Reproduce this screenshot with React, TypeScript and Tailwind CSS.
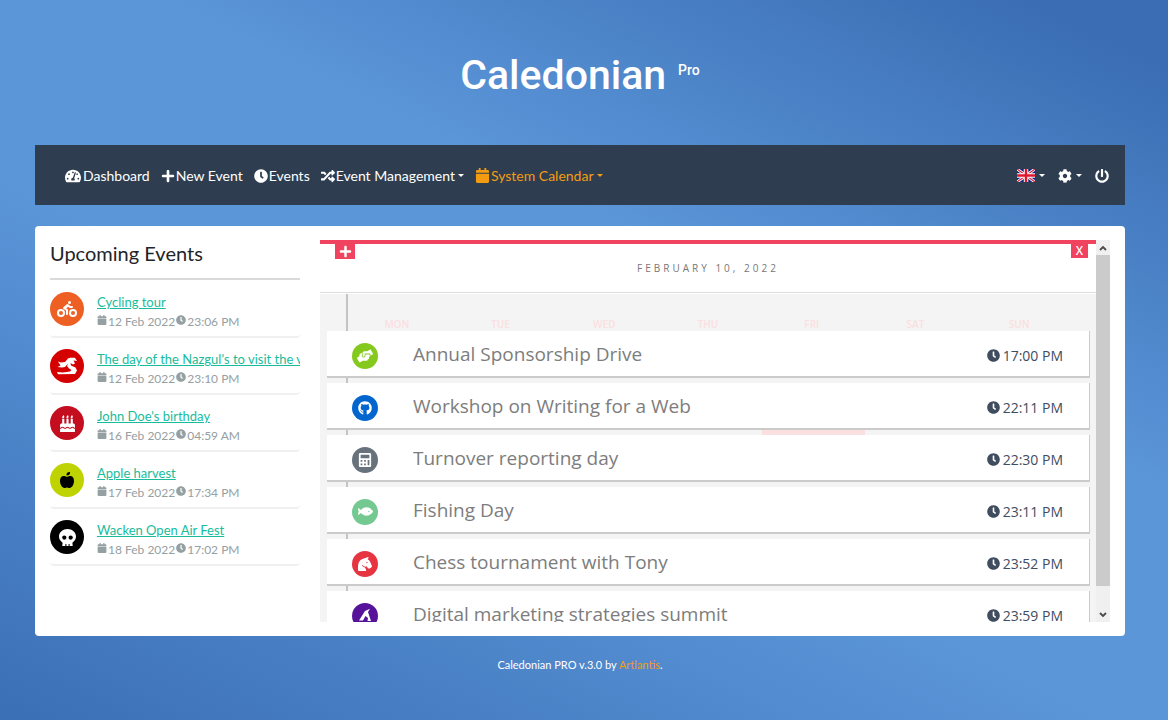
import type { ReactNode } from 'react'
import {
  FaTachometerAlt,
  FaPlus,
  FaClock,
  FaRandom,
  FaCalendar,
  FaCog,
  FaPowerOff,
  FaBiking,
  FaBirthdayCake,
  FaAppleAlt,
  FaSkull,
  FaHandsHelping,
  FaGithub,
  FaCalculator,
  FaFish,
  FaHorseHead
} from 'react-icons/fa'

interface UpcomingEvent {
  title: string
  date: string
  time: string
  color: string
  icon: ReactNode
}

interface DayEvent {
  title: string
  time: string
  color: string
  icon: ReactNode
}

const SerpentIcon = () => (
  <svg viewBox="0 0 22 18" className="h-[18px] w-[22px]" fill="currentColor" aria-hidden="true">
    <path d="M2 4.500 5 5.500 9 5 12 1.500 14 .8 19 .8 21 4 17.500 3.500 19 6.500 17 7.500 14.500 6 15 8.500 19.500 10.500 21 13.500 19 17 2 17.200 1 15 7 15.500 14 14.500 15.500 13 13 11.500 11 9 12 6.500 9 10 6 10.500 1.500 10 4.500 8.500z" />
  </svg>
)

const PeakIcon = () => (
  <svg viewBox="0 0 16 16" className="size-4" fill="currentColor" aria-hidden="true">
    <path d="M2 12.500 8 3 13 .8 11 4 14 13H10.500L11 10 8.500 8 6 12.500z" />
    <path d="M1 14h14v1.500H1z" />
  </svg>
)

const upcomingEvents: UpcomingEvent[] = [
  { title: 'Cycling tour', date: '12 Feb 2022', time: '23:06 PM', color: 'bg-[#ee5f24] text-white', icon: <FaBiking size={20} /> },
  { title: "The day of the Nazgul's to visit the village", date: '12 Feb 2022', time: '23:10 PM', color: 'bg-[#d50000] text-white', icon: <SerpentIcon /> },
  { title: "John Doe's birthday", date: '16 Feb 2022', time: '04:59 AM', color: 'bg-[#c40d1e] text-white', icon: <FaBirthdayCake size={17} /> },
  { title: 'Apple harvest', date: '17 Feb 2022', time: '17:34 PM', color: 'bg-[#bfd300] text-black', icon: <FaAppleAlt size={16} /> },
  { title: 'Wacken Open Air Fest', date: '18 Feb 2022', time: '17:02 PM', color: 'bg-black text-white', icon: <FaSkull size={17} /> }
]

const dayEvents: DayEvent[] = [
  { title: 'Annual Sponsorship Drive', time: '17:00 PM', color: 'bg-[#85c91f]', icon: <FaHandsHelping size={16} /> },
  { title: 'Workshop on Writing for a Web', time: '22:11 PM', color: 'bg-[#0366cf]', icon: <FaGithub size={14} /> },
  { title: 'Turnover reporting day', time: '22:30 PM', color: 'bg-[#68727d]', icon: <FaCalculator size={14} /> },
  { title: 'Fishing Day', time: '23:11 PM', color: 'bg-[#73c990]', icon: <FaFish size={15} /> },
  { title: 'Chess tournament with Tony', time: '23:52 PM', color: 'bg-[#e63441]', icon: <FaHorseHead size={14} /> },
  { title: 'Digital marketing strategies summit', time: '23:59 PM', color: 'bg-[#56139a]', icon: <PeakIcon /> }
]

const weekDays = ['MON', 'TUE', 'WED', 'THU', 'FRI', 'SAT', 'SUN']

const Caret = () => (
  <span className="ml-0.5 inline-block border-x-[3px] border-t-[3px] border-x-transparent border-t-current" />
)

const Flag = () => (
  <svg viewBox="0 0 18 13" className="h-[13px] w-[18px]" aria-hidden="true">
    <path fill="#10237c" d="M0 0h18v13H0z" />
    <path stroke="#fff" strokeWidth="3" d="m0 0 18 13M18 0 0 13" />
    <path stroke="#d8203a" strokeWidth="1.2" d="m0 0 18 13M18 0 0 13" />
    <path stroke="#fff" strokeWidth="4.500" d="M9 0v13M0 6.500h18" />
    <path stroke="#e0162f" strokeWidth="2.500" d="M9 0v13M0 6.500h18" />
  </svg>
)

function Navbar() {
  return (
    <nav className="flex h-[60px] items-center justify-between bg-[#2e3e50] pt-px pr-4 pl-[30px] text-sm text-white">
      <div className="flex items-center gap-[11px]">
        <a href="#" className="flex items-center gap-0.5"><FaTachometerAlt size={16} />Dashboard</a>
        <a href="#" className="flex items-center gap-px"><FaPlus size={14} />New Event</a>
        <a href="#" className="flex items-center gap-px"><FaClock size={14} />Events</a>
        <button type="button" className="flex items-center gap-px"><FaRandom size={14} />Event Management<Caret /></button>
        <button type="button" className="flex items-center gap-px text-[#f39c12]"><FaCalendar size={15} />System Calendar<Caret /></button>
      </div>
      <div className="flex items-center gap-[13px]">
        <button type="button" aria-label="Language" className="flex items-center gap-0.5"><Flag /><Caret /></button>
        <button type="button" aria-label="Settings" className="flex items-center gap-0.5"><FaCog size={14} /><Caret /></button>
        <a href="#" aria-label="Log out"><FaPowerOff size={14} /></a>
      </div>
    </nav>
  )
}

function UpcomingList() {
  return (
    <section className="w-[250px] shrink-0">
      <h2 className="border-b-2 border-[#d9dadb] pb-3 text-xl leading-[26px] text-[#1f2428]">Upcoming Events</h2>
      <ul className="mt-3 flex flex-col gap-[11px]">
        {upcomingEvents.map(event => (
          <li key={event.title} className="flex h-[46px] gap-[13px] rounded border-b-2 border-[#f0f0f0]">
            <span className={`flex size-[34px] shrink-0 items-center justify-center rounded-full ${event.color}`}>
              {event.icon}
            </span>
            <div className="min-w-0">
              <a href="#" className="block overflow-hidden text-[13px] leading-5 whitespace-nowrap text-[#18bc9c] underline">
                {event.title}
              </a>
              <p className="flex gap-px text-xs leading-5 text-[#95a0a2]">
                <FaCalendar size={10} className="mt-[3px]" />
                {event.date}
                <FaClock size={10} className="mt-[3px]" />
                {event.time}
              </p>
            </div>
          </li>
        ))}
      </ul>
    </section>
  )
}

function DayPanel() {
  return (
    <section className="flex h-[382px] min-w-0 flex-1 font-['Open_Sans',sans-serif]">
      <div className="min-w-0 flex-1 overflow-hidden">
        <header className="relative flex h-[53px] items-center justify-center border-t-4 border-b border-t-[#f0435f] border-b-[#dedede]">
          <button type="button" aria-label="Add event" className="absolute top-0 left-[15px] flex h-[15px] w-5 items-center justify-center bg-[#f0435f] text-white">
            <FaPlus size={13} />
          </button>
          <h3 className="text-[10px] tracking-[3px] text-[#777]">FEBRUARY 10, 2022</h3>
          <button type="button" aria-label="Close" className="absolute top-0 right-2 flex h-[14px] w-[17px] items-center justify-center bg-[#f0435f] font-['Noto_Sans',sans-serif] text-xs font-medium text-white">
            X
          </button>
        </header>

        <div className="relative mt-px bg-[#f4f4f4] pr-[6px] pl-[7px]">
          {/* timeline and today's marker behind the cards */}
          <div className="absolute inset-y-0 left-[26px] w-[2px] bg-[#c4c4c4]" />
          <div className="absolute top-[136px] left-[57%] h-[5px] w-[103px] bg-[#fbe0e2]" />
          <div className="mr-[19px] ml-[18px] grid h-[37px] grid-cols-7 items-end text-center text-[10px] leading-[14px] font-semibold text-[#fbdfe2]">
            {weekDays.map(day => (
              <span key={day}>{day}</span>
            ))}
          </div>
          <ul className="relative flex flex-col gap-[5px]">
            {dayEvents.map(event => (
              <li key={event.title} className="flex h-[47px] items-center border-r border-b-2 border-[#cbcbcb] bg-white pr-[26px] pl-[25px]">
                <span className={`mt-1 flex size-[26px] items-center justify-center rounded-full text-white ${event.color}`}>
                  {event.icon}
                </span>
                <a href="#" className="ml-[35px] flex-1 truncate text-[19px] leading-7 text-[#7d7d7d]">{event.title}</a>
                <span className="mt-1 flex items-center gap-[3px] text-sm text-[#3f4d5f]">
                  <FaClock size={13} />
                  {event.time}
                </span>
              </li>
            ))}
          </ul>
        </div>
      </div>

      <div className="flex w-[14px] shrink-0 flex-col bg-[#f0f0f0] text-[#4a4a4a]">
        <button type="button" aria-label="Scroll up" className="flex h-[15px] items-center justify-center">
          <svg viewBox="0 0 8 6" className="h-[6px] w-2" fill="none" stroke="currentColor" strokeWidth="1.8"><path d="m1 5 3-3 3 3" /></svg>
        </button>
        <div className="flex-1">
          <div className="h-[94%] bg-[#cbcbcb]" />
        </div>
        <button type="button" aria-label="Scroll down" className="flex h-[15px] items-center justify-center">
          <svg viewBox="0 0 8 6" className="h-[6px] w-2" fill="none" stroke="currentColor" strokeWidth="1.8"><path d="m1 1 3 3 3-3" /></svg>
        </button>
      </div>
    </section>
  )
}

export default function App() {
  return (
    <div className="min-h-screen bg-[linear-gradient(26deg,#3b6fb5_0%,#5b96d9_42%,#5b96d9_62%,#3a6db3_95%)] pr-[43px] pl-[35px] font-['Lato',sans-serif]">
      <header className="flex h-[145px] items-start justify-center gap-3 pt-12 font-['Roboto',sans-serif] font-medium text-white">
        <h1 className="text-[41px] leading-[54px]">Caledonian</h1>
        <span className="pt-3 text-sm leading-5">Pro</span>
      </header>

      <Navbar />

      <main className="mt-[21px] flex gap-5 rounded bg-white px-[15px] py-[14px]">
        <UpcomingList />
        <DayPanel />
      </main>

      <footer className="py-5 text-center text-[11px] leading-[18px] text-white">
        Caledonian PRO v.3.0 by <a href="#" className="text-[#f39c12]">Artlantis</a>.
      </footer>
    </div>
  )
}
